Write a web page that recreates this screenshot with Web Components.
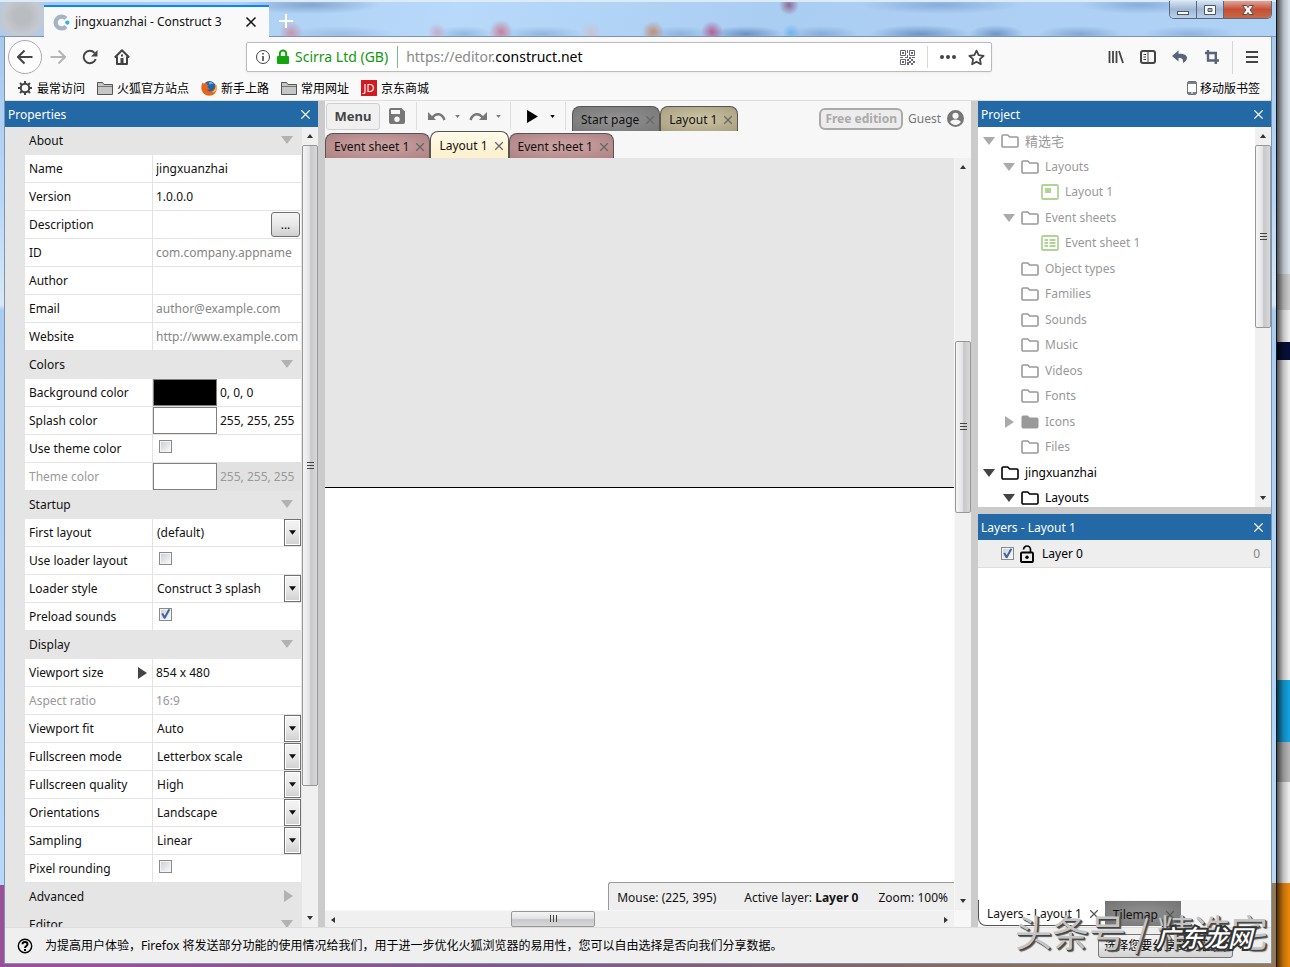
<!DOCTYPE html>
<html lang="zh-CN">
<head>
<meta charset="utf-8">
<title>jingxuanzhai - Construct 3</title>
<style>
  html, body { height: 100%; }
  body {
    margin: 0;
    overflow: hidden;
    font: 12px/18px "Noto Sans", "Noto Sans CJK SC", sans-serif;
    color: #111;
  }
</style>
</head>
<body>
<desk-top>
  <browser-window>
    <title-bar slot="title"></title-bar>
    <nav-bar></nav-bar>
    <bookmark-bar></bookmark-bar>
    <editor-app>
      <dock-panel slot="left" heading="Properties"><property-grid></property-grid></dock-panel>
      <editor-view slot="main"></editor-view>
      <dock-panel slot="project" heading="Project"><project-tree></project-tree></dock-panel>
      <dock-panel slot="layers" heading="Layers - Layout 1"><layer-list></layer-list></dock-panel>
    </editor-app>
    <notice-bar></notice-bar>
  </browser-window>
</desk-top>

<script>
const ICONS = {
  close: ['0 0 12 12', '<path d="M1.500 1.500l9 9M10.500 1.500l-9 9" fill="none" stroke="currentColor" stroke-width="1.500"/>'],
  plus: ['0 0 14 14', '<path d="M7 0v14M0 7h14" fill="none" stroke="currentColor" stroke-width="2"/>'],
  back: ['0 0 16 16', '<path d="M15.500 8H1M7.500 1.500L1 8l6.500 6.500" fill="none" stroke="currentColor" stroke-width="2"/>'],
  forward: ['0 0 16 16', '<path d="M.5 8H15M8.500 1.500L15 8l-6.500 6.500" fill="none" stroke="currentColor" stroke-width="2"/>'],
  reload: ['0 0 16 16', '<path d="M13.700 10A6.200 6.200 0 1 1 12.500 3.800" fill="none" stroke="currentColor" stroke-width="2"/><path d="M15.500 1v6.500H9z" fill="currentColor"/>'],
  home: ['0 0 16 16', '<path d="M.8 8.500L8 1.300l7.200 7.200M3 7.500V15h10V7.500" fill="none" stroke="currentColor" stroke-width="2" stroke-linejoin="round"/><path d="M6.500 9h3v6h-3zM7 5.500h2v2H7z" fill="currentColor"/>'],
  info: ['0 0 16 16', '<circle cx="8" cy="8" r="6.500" fill="none" stroke="currentColor"/><path d="M7.200 4h1.600v1.600H7.200zM7.200 7h1.600v5H7.200z" fill="currentColor"/>'],
  lock: ['0 0 14 16', '<path d="M3.800 7V4.800a3.200 3.200 0 0 1 6.400 0V7" fill="none" stroke="currentColor" stroke-width="2"/><rect x="1" y="7" width="12" height="8" rx="1" fill="currentColor"/>'],
  qr: ['0 0 15 15', '<path d="M.5.5h5v5h-5zM9.500.5h5v5h-5zM.5 9.500h5v5h-5z" fill="none" stroke="currentColor"/><path d="M2 2h2v2H2zM11 2h2v2h-2zM2 11h2v2H2zM7 0h1v3H7zM7 5h1v3H7zM0 7h3v1H0zM5 7h2v1H5zM9 7h2v2H9zM12 7h3v1h-3zM7 9h2v2H7zM11 9h2v2h-2zM9 11h2v2H9zM13 11h2v2h-2zM11 13h2v2h-2zM7 12h2v3H7z" fill="currentColor"/>'],
  dots: ['0 0 16 16', '<g fill="currentColor"><circle cx="2" cy="8" r="2"/><circle cx="8" cy="8" r="2"/><circle cx="14" cy="8" r="2"/></g>'],
  star: ['0 0 16 16', '<path d="M8 1.500l2 4.300 4.700.6-3.500 3.200.9 4.700L8 12l-4.100 2.300.9-4.700L1.300 6.400 6 5.800z" fill="none" stroke="currentColor" stroke-width="1.700" stroke-linejoin="round"/>'],
  library: ['0 0 16 16', '<path d="M1.500 2v12M5 2v12M8.500 2v12M11 2l4 12" fill="none" stroke="currentColor" stroke-width="1.800"/>'],
  sidebar: ['0 0 16 14', '<rect x="1" y="1" width="14" height="12" rx="2" fill="none" stroke="currentColor" stroke-width="2"/><path d="M8 1v12M3.500 4.500H6M3.500 7H6M3.500 9.500H6" fill="none" stroke="currentColor"/>'],
  reply: ['0 0 16 16', '<path d="M6.500 1.500L0 7l6.500 5.500V9c3.500-.3 5 1 4.500 5 2.500-1 4-3 4-5.200C15 6.200 12 4.500 6.500 4.800z" fill="currentColor"/>'],
  crop: ['0 0 16 16', '<path d="M4 1v10.500h11M1 4h10.800v11" fill="none" stroke="currentColor" stroke-width="2.400"/>'],
  menu: ['0 0 14 14', '<path d="M1 2h12M1 7h12M1 12h12" stroke="currentColor" stroke-width="2"/>'],
  gear: ['0 0 16 16', '<circle cx="8" cy="8" r="4.200" fill="none" stroke="currentColor" stroke-width="2"/><path d="M8 1v3M8 12v3M1 8h3M12 8h3M3 3l2 2M11 11l2 2M13 3l-2 2M5 11l-2 2" stroke="currentColor" stroke-width="2"/>'],
  bookmarks: ['0 0 16 14', '<path d="M.5 13.500v-12h5l1.500 2h8.500v10z" fill="#c6c6c6" stroke="#555"/><path d="M1 5.500h14" stroke="#777"/>'],
  firefox: ['0 0 16 16', '<circle cx="8.500" cy="7.500" r="6.500" fill="#2a62a8"/><path d="M8 2.500c2-1 4 0 4.500 1.500-1.500-.5-2 .5-3 .5-1.500 0-2-1-1.500-2z" fill="#6db4e0"/><path d="M1.500 2.500C0 6-.2 9 1.500 12c3 4.800 10 5 13 .5 1.600-2.500 1.700-6 .3-8.500-.3 3-1 5.500-3 6.700-2.300 1.300-5 .8-6-1 1.500.5 2.500-.2 3-1-2-.2-2.500-1-2.300-2l1.500-1C6.500 5 5.500 4.500 5 2.500 4 3 3.600 3.600 3.500 4.200z" fill="#e8641b"/><path d="M14.800 4c.2 4-1.500 7-4.300 8.200 1.800.2 3 0 4-1 1.400-2 1.500-5 .3-7.200z" fill="#fdc12d"/>'],
  phone: ['0 0 10 16', '<rect x=".5" y="1.500" width="9" height="13" rx="1.500" fill="#fff" stroke="#6d7076"/><path d="M1 2h8v2H1zM1 12h8v2H1z" fill="#7b7f86"/><path d="M4 13h2" stroke="#fff"/>'],
  construct: ['0 0 16 16', '<path d="M12.200 11.800A5.600 5.600 0 1 1 12.200 4.200" fill="none" stroke="#a5b3c3" stroke-width="4"/><circle cx="13.500" cy="8" r="2" fill="#2fb2e8"/>'],
  save: ['0 0 16 16', '<path d="M2 0h10.500L16 3.500V14a2 2 0 0 1-2 2H2a2 2 0 0 1-2-2V2a2 2 0 0 1 2-2zm0 2v4h9V2zm6 6.500a2.700 2.700 0 1 0 0 5.400 2.700 2.700 0 0 0 0-5.400z" fill="currentColor" fill-rule="evenodd"/>'],
  undo: ['0 0 18 10', '<path d="M4 7C8 1.500 14 2 16.500 9" fill="none" stroke="currentColor" stroke-width="2.400"/><path d="M0 1v8h8z" fill="currentColor"/>'],
  redo: ['0 0 18 10', '<path d="M14 7C10 1.500 4 2 1.500 9" fill="none" stroke="currentColor" stroke-width="2.400"/><path d="M18 1v8h-8z" fill="currentColor"/>'],
  play: ['0 0 10 12', '<path d="M0 0l10 6-10 6z" fill="currentColor"/>'],
  caret: ['0 0 6 4', '<path d="M0 0h6L3 4z" fill="currentColor"/>'],
  down: ['0 0 12 8', '<path d="M0 0h12L6 8z" fill="currentColor"/>'],
  right: ['0 0 9 12', '<path d="M0 0l9 6-9 6z" fill="currentColor"/>'],
  user: ['0 0 16 16', '<path d="M8 0a8 8 0 1 0 0 16A8 8 0 0 0 8 0zm0 2.500a2.900 2.900 0 1 1 0 5.800 2.900 2.900 0 0 1 0-5.800zM8 14c-2.200 0-4-1-5-2.700.3-1.600 3-2.400 5-2.400s4.700.8 5 2.400C12 13 10.200 14 8 14z" fill="currentColor"/>'],
  folder: ['0 0 18 14', '<path d="M1 2.200Q1 1 2.200 1h4.500l2 2h7.100Q17 3 17 4.200v7.600q0 1.200-1.200 1.200H2.200Q1 13 1 11.800z" fill="none" stroke="currentColor" stroke-width="1.600"/>'],
  folderFull: ['0 0 18 14', '<path d="M.5 2.200Q.5.500 2.200.500h4.500l2 2h7.100q1.700 0 1.700 1.700v7.600q0 1.700-1.700 1.700H2.200q-1.700 0-1.700-1.700z" fill="currentColor"/>'],
  layout: ['0 0 18 16', '<rect x="1" y="1" width="16" height="14" rx="1" fill="none" stroke="#b0d494" stroke-width="1.800"/><path d="M4 4h6v5H4z" fill="#b0d494"/>'],
  sheet: ['0 0 18 16', '<rect x="1" y="1" width="16" height="14" rx="1" fill="none" stroke="#b0d494" stroke-width="1.800"/><path d="M3.500 5H7M8.500 5h6M3.500 8H7M8.500 8h6M3.500 11H7M8.500 11h6" stroke="#b0d494" stroke-width="1.800"/>'],
  unlock: ['0 0 14 18', '<path d="M3.500 4.500a3.500 3.500 0 0 1 7 0V8" fill="none" stroke="currentColor" stroke-width="1.700"/><rect x="1" y="7.500" width="12" height="9.500" rx="1" fill="none" stroke="currentColor" stroke-width="1.900"/><circle cx="7" cy="12.200" r="1.700" fill="currentColor"/>'],
  help: ['0 0 16 16', '<circle cx="8" cy="8" r="6.700" fill="none" stroke="currentColor" stroke-width="1.400"/><path d="M5.500 6.300C5.500 3.300 10.500 3.300 10.500 6.300 10.500 8 8 8 8 10" fill="none" stroke="currentColor" stroke-width="1.900"/><path d="M7 11h2v2H7z" fill="currentColor"/>'],
  minimize: ['0 0 14 12', '<rect x="1.500" y="7.500" width="11" height="3" fill="#fff" stroke="#4c566b"/>'],
  maximize: ['0 0 14 12', '<path d="M1.500 1.500h11v9h-11zM5 4.500h4v3H5z" fill="#fff" stroke="#4c566b" fill-rule="evenodd"/>'],
  quit: ['0 0 14 12', '<path d="M1.500 1.500h4L7 3.500l1.500-2h4L9 6l3.500 4.500h-4L7 8.500l-1.500 2h-4L5 6z" fill="#fff" stroke="#5a4a55"/>']
};

function icon(name, width, color) {
  const [box, body] = ICONS[name];
  const [, , w, h] = box.split(' ');
  const height = Math.round(width * h / w);
  return `<svg viewBox="${box}" width="${width}" height="${height}" ${color ? `style="color:${color}"` : ''} aria-hidden="true">${body}</svg>`;
}

const RESET = `
  :host, * { box-sizing: border-box; }
  svg { display: block; flex: none; }
  button, input, select { font: inherit; color: inherit; margin: 0; padding: 0; border: 0; border-radius: 0; background: none; outline: none; }
  button { display: flex; align-items: center; justify-content: center; flex: none; }
  a { color: inherit; text-decoration: none; }
`;

const CHECKBOX = `
  input[type=checkbox] {
    appearance: none;
    display: block;
    flex: none;
    width: 13px;
    height: 13px;
    border: 1px solid #8a8a8a;
    background: linear-gradient(135deg, #c9cdd2, #fbfbfb);
    box-shadow: inset 0 0 0 1px #f4f4f4;
  }
  input[type=checkbox]:checked::before {
    content: "";
    display: block;
    width: 11px;
    height: 11px;
    background: #3f62a5;
    clip-path: polygon(12% 48%, 28% 42%, 42% 66%, 76% 4%, 94% 8%, 48% 94%, 34% 92%);
  }
`;

class BaseElement extends HTMLElement {
  constructor() {
    super();
    this.shadow = this.attachShadow({ mode: 'open' });
  }

  connectedCallback() {
    this.shadow.innerHTML = `<style>${RESET}${this.styles()}</style>${this.render()}`;
  }

  styles() { return ''; }

  render() { return '<slot></slot>'; }
}

// Glass desktop with the slice of the windows lying behind on the right
class DeskTop extends BaseElement {
  styles() {
    return `
      :host { display: grid; grid-template-columns: minmax(0, 1fr) 13px; height: 100vh; position: relative; overflow: hidden; }
      .behind {
        background:
          linear-gradient(90deg, rgba(0,0,0,.65), rgba(0,0,0,.2) 50%, transparent),
          linear-gradient(#dfe8f2 0 274px, #cfcfcf 274px 310px, #f4f4f4 310px 342px, #07103a 342px 360px, #f2f2f2 360px 680px, #14a6e4 680px 742px, #b9b9b9 742px 782px, #f2f2f2 782px 883px, #ef8a0c 883px);
      }
      .mark { position: absolute; white-space: nowrap; pointer-events: none; }
      .author {
        right: 22px;
        bottom: 12px;
        font: 37px/48px "Noto Sans CJK SC", sans-serif;
        color: #c4c4c4;
        text-shadow: 1px 1px 0 #444, 2px 2px 1px #555;
      }
      .site {
        right: 38px;
        bottom: 15px;
        font: italic 500 24px/30px "Noto Sans CJK SC", sans-serif;
        color: #fff;
        -webkit-text-stroke: 4px #333;
        paint-order: stroke fill;
      }
    `;
  }

  render() {
    return `
      <slot></slot>
      <div class="behind"></div>
      <div class="mark author">头条号 / 精选宅</div>
      <div class="mark site">广东龙网</div>
    `;
  }
}

class BrowserWindow extends BaseElement {
  styles() {
    return `
      :host {
        display: flex;
        flex-direction: column;
        min-width: 0;
        min-height: 0;
        padding: 0 4px 3px;
        border-right: 1px solid #151515;
        background:
          linear-gradient(transparent 885px, #9a4f98 885px) left / 6px 100% no-repeat,
          linear-gradient(transparent 883px, #94785a 883px) right / 6px 100% no-repeat,
          linear-gradient(90deg, #9a4f98 10%, #80588a 40%, #836a63 75%, #94785a) bottom / 100% 4px no-repeat,
          linear-gradient(#b4d5f7, #a6c9ee 37px, #b7d7f8 200px, #d8e9f8 305px, #a9cdf2 310px, #b9dbfa);
      }
      .client {
        display: flex;
        flex-direction: column;
        flex: 1;
        min-height: 0;
        border: 1px solid #7f93ab;
        border-top: 0;
        background: #f9f9fa;
      }
    `;
  }

  render() {
    return '<slot name="title"></slot><div class="client"><slot></slot></div>';
  }
}

class TitleBar extends BaseElement {
  styles() {
    return `
      :host {
        display: flex;
        align-items: flex-end;
        flex: none;
        height: 37px;
        margin: 0 -4px;
        padding-left: 44px;
        border-top: 2px solid #dcebf9;
        box-shadow: inset 0 -1px #7f93ab;
        background:
          radial-gradient(circle at 22px 14px, #b9bcc1 8px, #c5c9cf 18px, transparent 30px),
          radial-gradient(circle at 291px 31px, rgba(214,110,130,.6), transparent 12px),
          radial-gradient(circle at 437px 30px, rgba(214,130,150,.5), transparent 9px),
          radial-gradient(circle at 501px 30px, rgba(204,90,115,.7), transparent 12px),
          radial-gradient(circle at 591px 31px, rgba(205,190,200,.8), transparent 11px),
          radial-gradient(circle at 653px 30px, rgba(195,125,90,.8), transparent 11px),
          radial-gradient(circle at 712px 30px, rgba(180,50,110,.7), transparent 11px),
          radial-gradient(circle at 789px 3px, rgba(140,80,120,.8), transparent 10px),
          radial-gradient(circle at 791px 31px, rgba(90,170,235,.7), transparent 9px),
          radial-gradient(ellipse 55px 8px at 340px 32px, rgba(120,155,200,.4), transparent),
          radial-gradient(ellipse 30px 8px at 464px 32px, rgba(110,150,200,.5), transparent),
          radial-gradient(ellipse 42px 8px at 542px 32px, rgba(110,150,200,.5), transparent),
          radial-gradient(ellipse 32px 8px at 680px 32px, rgba(110,150,200,.5), transparent),
          radial-gradient(ellipse 38px 8px at 746px 32px, rgba(80,120,175,.7), transparent),
          radial-gradient(ellipse 36px 8px at 822px 32px, rgba(110,150,200,.6), transparent),
          radial-gradient(ellipse 50px 9px at 920px 32px, rgba(85,125,180,.7), transparent),
          radial-gradient(ellipse 28px 9px at 996px 32px, rgba(85,125,180,.7), transparent),
          radial-gradient(ellipse 42px 8px at 1080px 32px, rgba(100,140,190,.6), transparent),
          radial-gradient(ellipse 46px 8px at 1190px 32px, rgba(110,150,200,.5), transparent),
          radial-gradient(ellipse 70px 9px at 310px 3px, rgba(100,135,180,.6), transparent),
          radial-gradient(ellipse 80px 9px at 940px 3px, rgba(110,150,200,.6), transparent),
          radial-gradient(ellipse 60px 9px at 1140px 3px, rgba(110,150,200,.6), transparent),
          linear-gradient(100deg, #a8cbf0 8%, #b8d9f9 36%, #aacdf2 60%, #b0d2f5);
      }
      .tab { display: flex; align-items: center; width: 225px; height: 32px; padding: 0 12px 0 9px; gap: 5px; border-top: 2px solid #0a84ff; background: #f9f9fa; }
      .tab span { flex: 1; white-space: nowrap; }
      .new { height: 32px; margin-left: 10px; color: #fff; }
      .controls { display: flex; align-self: flex-start; margin: -1px 4px 0 auto; border: 1px solid #59687f; border-top: 0; border-radius: 0 0 5px 5px; overflow: hidden; }
      .controls button { width: 27px; height: 17px; border-right: 1px solid #59687f; background: linear-gradient(#d5e3f2, #9fb7d3 50%, #b9d1ea); }
      .controls button:last-child { width: 47px; border: 0; background: linear-gradient(#e5a493, #c34f36 50%, #c96a45); }
    `;
  }

  render() {
    return `
      <div class="tab">${icon('construct', 17)}<span>jingxuanzhai - Construct 3</span><button aria-label="Close tab">${icon('close', 12)}</button></div>
      <button class="new" aria-label="New tab">${icon('plus', 14)}</button>
      <div class="controls">
        <button aria-label="Minimize">${icon('minimize', 14)}</button>
        <button aria-label="Maximize">${icon('maximize', 14)}</button>
        <button aria-label="Close">${icon('quit', 14)}</button>
      </div>
    `;
  }
}

class NavBar extends BaseElement {
  styles() {
    return `
      :host { display: flex; align-items: center; flex: none; height: 40px; padding: 0 12px 0 3px; color: #444; }
      .back { width: 34px; height: 34px; border: 1px solid #aaa; border-radius: 50%; background: #fff; }
      .tools { display: flex; align-items: center; gap: 16px; margin-left: 8px; }
      .field {
        display: flex;
        align-items: center;
        flex: 1;
        height: 30px;
        margin: 0 116px;
        padding: 0 6px 0 8px;
        border: 1px solid #bbb;
        border-radius: 2px;
        background: #fff;
        box-shadow: 0 1px 3px rgba(0,0,0,.06);
        font-size: 14px;
        line-height: 20px;
        white-space: nowrap;
      }
      .owner { margin: 0 9px 0 5px; color: #12980c; }
      .owner + i { background: #7ec17b; }
      i { width: 1px; height: 22px; background: #d7d7d7; }
      label { margin-left: 8px; color: #888; }
      input { flex: 1; min-width: 0; height: 20px; color: #000; }
      .lock { margin-left: 5px; }
      .qr { margin-right: 12px; color: #667; }
      .dots { margin: 0 12px; }
      .right { display: flex; align-items: center; gap: 16px; }
      .right i { height: 33px; margin: 0 -4px; }
      .blue { color: #56657a; }
    `;
  }

  render() {
    return `
      <button class="back" aria-label="Back">${icon('back', 16)}</button>
      <div class="tools">
        <button aria-label="Forward">${icon('forward', 16, '#b5b5b5')}</button>
        <button aria-label="Reload">${icon('reload', 16)}</button>
        <button aria-label="Home">${icon('home', 16)}</button>
      </div>
      <div class="field">
        ${icon('info', 16)}
        <span class="lock">${icon('lock', 14, '#12a50c')}</span>
        <span class="owner">Scirra Ltd (GB)</span><i></i>
        <label for="url">https://editor.</label><input id="url" value="construct.net">
        <button class="qr" aria-label="QR code">${icon('qr', 15)}</button><i></i>
        <button class="dots" aria-label="Page actions">${icon('dots', 16)}</button>
        <button aria-label="Bookmark">${icon('star', 17)}</button>
      </div>
      <div class="right">
        <button aria-label="Library">${icon('library', 16)}</button>
        <button aria-label="Sidebars">${icon('sidebar', 16)}</button>
        <button class="blue" aria-label="Undo close">${icon('reply', 16)}</button>
        <button class="blue" aria-label="Screenshot">${icon('crop', 16)}</button>
        <i></i>
        <button aria-label="Menu">${icon('menu', 14)}</button>
      </div>
    `;
  }
}

class BookmarkBar extends BaseElement {
  styles() {
    return `
      :host { display: flex; align-items: center; flex: none; gap: 12px; height: 24px; padding: 0 11px 2px 12px; border-bottom: 1px solid #ddd; font: 12px/18px "Noto Sans CJK SC", sans-serif; color: #000; }
      a { display: flex; align-items: center; gap: 4px; white-space: nowrap; }
      a:last-child { margin-left: auto; gap: 3px; }
      b { width: 16px; height: 16px; background: #d11a22; color: #fff; font: 11px/16px "Noto Sans", sans-serif; text-align: center; }
    `;
  }

  render() {
    return `
      <a href="#">${icon('gear', 16, '#444')}最常访问</a>
      <a href="#">${icon('bookmarks', 16)}火狐官方站点</a>
      <a href="#">${icon('firefox', 16)}新手上路</a>
      <a href="#">${icon('bookmarks', 16)}常用网址</a>
      <a href="#"><b>JD</b>京东商城</a>
      <a href="#">${icon('phone', 10)}移动版书签</a>
    `;
  }
}

class EditorApp extends BaseElement {
  styles() {
    return `
      :host { display: grid; grid-template-columns: 313px minmax(0, 1fr) 293px; gap: 7px; flex: 1; min-height: 0; background: #cbcbcb; }
      .side { display: grid; grid-template-rows: minmax(0, 406fr) minmax(0, 413fr); gap: 7px; min-height: 0; }
      ::slotted(*) { min-height: 0; min-width: 0; }
    `;
  }

  render() {
    return `
      <slot name="left"></slot>
      <slot name="main"></slot>
      <div class="side"><slot name="project"></slot><slot name="layers"></slot></div>
    `;
  }
}

class DockPanel extends BaseElement {
  styles() {
    return `
      :host { display: flex; flex-direction: column; overflow: hidden; background: #fff; }
      header { display: flex; align-items: center; justify-content: space-between; flex: none; height: 26px; padding: 2px 7px 0 3px; background: #2369a5; color: #fff; }
      header button { margin-bottom: 2px; }
      ::slotted(*) { flex: 1; min-height: 0; }
    `;
  }

  render() {
    return `
      <header><span>${this.getAttribute('heading')}</span><button aria-label="Close panel">${icon('close', 11)}</button></header>
      <slot></slot>
    `;
  }
}

// range holds the shares of the track before, under and after the thumb
class ScrollBar extends BaseElement {
  styles() {
    const dir = this.hasAttribute('horizontal') ? 'row' : 'column';
    const [before, thumb, after] = this.getAttribute('range').split(' ');
    return `
      :host { display: flex; flex-direction: ${dir}; background: #f0f0f0; }
      button { width: 16px; height: 18px; color: #333; }
      .before { flex: ${before} 0 0; }
      .after { flex: ${after} 0 0; }
      .thumb {
        display: flex;
        flex-direction: ${dir};
        align-items: center;
        justify-content: center;
        gap: 2px;
        flex: ${thumb} 0 0;
        border: 1px solid #979797;
        border-radius: 2px;
        background: linear-gradient(${dir === 'row' ? '180deg' : '90deg'}, #f5f5f5, #e4e4e6 45%, #c8c8cb 55%, #d8d8da);
      }
      .thumb i { ${dir === 'row' ? 'width: 1px; height: 7px;' : 'width: 7px; height: 1px;'} background: #444; }
    `;
  }

  render() {
    const horizontal = this.hasAttribute('horizontal');
    const arrow = (turn) => `<button aria-label="Scroll"><svg viewBox="0 0 6 4" width="6" height="4" style="transform: rotate(${turn}deg)"><path d="M0 4h6L3 0z" fill="currentColor"/></svg></button>`;
    return `
      ${arrow(horizontal ? -90 : 0)}
      <div class="before"></div><div class="thumb"><i></i><i></i><i></i></div><div class="after"></div>
      ${arrow(horizontal ? 90 : 180)}
    `;
  }
}

const PROPERTIES = [
  { section: 'About' },
  { name: 'Name', text: 'jingxuanzhai' },
  { name: 'Version', text: '1.0.0.0' },
  { name: 'Description', more: true },
  { name: 'ID', hint: 'com.company.appname' },
  { name: 'Author', text: '' },
  { name: 'Email', hint: 'author@example.com' },
  { name: 'Website', hint: 'http://www.example.com' },
  { section: 'Colors' },
  { name: 'Background color', color: '#000000', text: '0, 0, 0' },
  { name: 'Splash color', color: '#ffffff', text: '255, 255, 255' },
  { name: 'Use theme color', check: false },
  { name: 'Theme color', color: '#ffffff', text: '255, 255, 255', disabled: true },
  { section: 'Startup' },
  { name: 'First layout', option: '(default)' },
  { name: 'Use loader layout', check: false },
  { name: 'Loader style', option: 'Construct 3 splash' },
  { name: 'Preload sounds', check: true },
  { section: 'Display' },
  { name: 'Viewport size', text: '854 x 480', expand: true },
  { name: 'Aspect ratio', text: '16:9', disabled: true },
  { name: 'Viewport fit', option: 'Auto' },
  { name: 'Fullscreen mode', option: 'Letterbox scale' },
  { name: 'Fullscreen quality', option: 'High' },
  { name: 'Orientations', option: 'Landscape' },
  { name: 'Sampling', option: 'Linear' },
  { name: 'Pixel rounding', check: false },
  { section: 'Advanced', closed: true },
  { section: 'Editor' }
];

class PropertyGrid extends BaseElement {
  styles() {
    return `
      ${CHECKBOX}
      :host { display: flex; gap: 1px; overflow: hidden; padding-left: 20px; background: #e5e5e5; }
      scroll-bar { width: 16px; flex: none; }
      .list { flex: 1; min-width: 0; overflow: hidden; }
      table { width: 100%; border-collapse: separate; border-spacing: 0; table-layout: fixed; }
      td, th { height: 28px; padding: 0; font-weight: normal; text-align: left; white-space: nowrap; }
      td, tr.item th { border-bottom: 1px solid #e3e3e3; background: #fff; }
      tr.item th { padding-left: 4px; border-right: 1px solid #e3e3e3; }
      th > div, td > div { display: flex; align-items: center; height: 27px; position: relative; }
      th > div { justify-content: space-between; }
      .head { width: 100%; height: 28px; padding: 0 8px 0 4px; justify-content: space-between; }
      .head svg { margin-bottom: 3px; color: #b2b2b2; }
      .expand { margin-right: 5px; color: #444; }
      input:not([type]) { flex: 1; min-width: 0; height: 27px; padding-left: 3px; }
      input::placeholder { color: #858585; opacity: 1; }
      input[type=color] { appearance: none; width: 64px; height: 27px; flex: none; border: 1px solid #808080; }
      input[type=color]::-webkit-color-swatch-wrapper { padding: 0; }
      input[type=color]::-webkit-color-swatch { border: 0; border-radius: 0; }
      input[type=checkbox] { margin: 0 0 5px 6px; }
      select { appearance: none; width: 100%; height: 27px; padding-left: 4px; }
      .drop { position: absolute; right: 0; top: 0; display: flex; align-items: center; justify-content: center; width: 17px; height: 27px; border: 1px solid #707070; background: linear-gradient(#f4f4f4, #e8e8e8 50%, #d0d0d0); box-shadow: inset 0 0 0 1px #fff; pointer-events: none; }
      .more { width: 29px; height: 25px; margin: 0 1px 0 auto; border: 1px solid #707070; border-radius: 3px; background: linear-gradient(#f4f4f4, #e8e8e8 50%, #d0d0d0); }
      .disabled { color: #999; }
      .disabled .tinted { background: #e1e1e1; }
    `;
  }

  row(prop, index) {
    if (prop.section) {
      return `<tr><th colspan="2"><button class="head">${prop.section}${prop.closed ? icon('right', 9) : icon('down', 12)}</button></th></tr>`;
    }
    const id = `prop${index}`;
    const off = prop.disabled ? 'disabled' : '';
    let value = '';
    if (prop.more) {
      value = `<button class="more" id="${id}">...</button>`;
    } else if (prop.option) {
      value = `<select id="${id}"><option>${prop.option}</option></select><span class="drop">${icon('caret', 7)}</span>`;
    } else if ('check' in prop) {
      value = `<input type="checkbox" id="${id}" ${prop.check ? 'checked' : ''}>`;
    } else if (prop.color) {
      value = `<input type="color" value="${prop.color}" aria-label="${prop.name}" ${off}><input id="${id}" value="${prop.text}" ${off}>`;
    } else {
      value = `<input id="${id}" value="${prop.text || ''}" placeholder="${prop.hint || ''}" ${off}>`;
    }
    return `
      <tr class="item ${off}">
        <th><div><label for="${id}">${prop.name}</label>${prop.expand ? `<button class="expand" aria-label="Expand">${icon('right', 9)}</button>` : ''}</div></th>
        <td><div class="${prop.color ? 'tinted' : ''}">${value}</div></td>
      </tr>
    `;
  }

  render() {
    return `
      <div class="list"><table><colgroup><col style="width:128px"><col></colgroup>${PROPERTIES.map((p, i) => this.row(p, i)).join('')}</table></div>
      <scroll-bar range="0 641 123"></scroll-bar>
    `;
  }
}

// Tabs: kind is start, sheet, layout or active
class TabChip extends BaseElement {
  styles() {
    return `
      :host { display: flex; align-items: center; gap: 6px; height: 25px; padding: 2px 4px 0 8px; border: 1px solid #555; border-bottom: 0; border-radius: 8px 8px 0 0; color: #111; white-space: nowrap; }
      :host([kind=start]) { background: radial-gradient(#939393, #777); }
      :host([kind=sheet]) { background: radial-gradient(#d0a5a5, #ac8282); }
      :host([kind=layout]) { background: radial-gradient(#cec5a5, #a89f80); }
      :host([kind=active]) { height: 27px; background: linear-gradient(#fffbea, #fdf0cb); }
      button { color: #666; }
    `;
  }

  render() {
    return `<slot></slot><button aria-label="Close tab">${icon('close', 10)}</button>`;
  }
}

class EditorView extends BaseElement {
  styles() {
    return `
      :host { display: grid; grid-template: 30px 27px minmax(0, 1fr) 17px / minmax(0, 1fr) 16px; column-gap: 1px; background: #f7f7f7; overflow: hidden; }
      .toolbar, .sheets { grid-column: 1 / 3; display: flex; }
      .toolbar { align-items: center; color: #777; white-space: nowrap; }
      .menu { width: 54px; height: 27px; margin: 0 9px 0 1px; border: 1px solid #d0d0d0; border-radius: 3px; background: #f0f0f0; font-weight: bold; font-size: 13px; color: #444; }
      .save { margin-right: 11px; }
      .toolbar i { width: 1px; height: 28px; background: #ddd; }
      .group { display: flex; align-items: center; gap: 9px; padding: 0 9px 0 11px; }
      .run { gap: 12px; padding: 0 10px 0 16px; color: #000; }
      .pages { display: flex; align-self: flex-end; margin-left: 6px; }
      .account { display: flex; align-items: center; gap: 5px; margin-left: auto; padding: 5px 7px 0 0; }
      .account a:first-child { padding: 0 4px; border: 2px solid #aaa; border-radius: 6px; background: #ececec; color: #aaa; font-weight: bold; }
      .account svg { margin-left: 1px; }
      .sheets { align-items: flex-end; }
      .canvas { display: flex; flex-direction: column; position: relative; background: #fff; }
      .outside { flex: 329 0 0; border-bottom: 1px solid #000; background: #e6e6e6; }
      .page { flex: 423 0 0; }
      .status { position: absolute; right: 0; bottom: 0; display: flex; align-items: center; gap: 20px; height: 28px; padding: 2px 6px 0 8px; border: 1px solid #999; border-width: 1px 0 0 1px; border-radius: 3px 0 0 0; background: #eee; white-space: nowrap; }
      .status span:first-child { margin-right: 8px; }
      .across { height: 16px; align-self: center; }
    `;
  }

  render() {
    return `
      <div class="toolbar">
        <button class="menu">Menu</button>
        <button class="save" aria-label="Save">${icon('save', 16)}</button><i></i>
        <div class="group">
          <button aria-label="Undo">${icon('undo', 18)}</button><button aria-label="Undo history">${icon('caret', 5)}</button>
          <button aria-label="Redo">${icon('redo', 18)}</button><button aria-label="Redo history">${icon('caret', 5)}</button>
        </div><i></i>
        <div class="group run"><button aria-label="Preview">${icon('play', 11)}</button><button aria-label="Preview options">${icon('caret', 5)}</button></div><i></i>
        <div class="pages"><tab-chip kind="start">Start page</tab-chip><tab-chip kind="layout">Layout 1</tab-chip></div>
        <div class="account"><a href="#">Free edition</a><a href="#">Guest</a>${icon('user', 17)}</div>
      </div>
      <div class="sheets">
        <tab-chip kind="sheet">Event sheet 1</tab-chip><tab-chip kind="active">Layout 1</tab-chip><tab-chip kind="sheet">Event sheet 1</tab-chip>
      </div>
      <div class="canvas">
        <div class="outside"></div>
        <div class="page"></div>
        <div class="status"><span>Mouse: (225, 395)</span><span>Active layer: <b>Layer 0</b></span><span>Zoom: 100%</span></div>
      </div>
      <scroll-bar range="166 170 381"></scroll-bar>
      <scroll-bar class="across" horizontal range="171 82 344"></scroll-bar>
    `;
  }
}

const TREE = [
  [0, 'folder', '精选宅', 'down'],
  [1, 'folder', 'Layouts', 'down'],
  [2, 'layout', 'Layout 1'],
  [1, 'folder', 'Event sheets', 'down'],
  [2, 'sheet', 'Event sheet 1'],
  [1, 'folder', 'Object types'],
  [1, 'folder', 'Families'],
  [1, 'folder', 'Sounds'],
  [1, 'folder', 'Music'],
  [1, 'folder', 'Videos'],
  [1, 'folder', 'Fonts'],
  [1, 'folderFull', 'Icons', 'right'],
  [1, 'folder', 'Files'],
  [0, 'folder', 'jingxuanzhai', 'down', true],
  [1, 'folder', 'Layouts', 'down', true]
];

class ProjectTree extends BaseElement {
  styles() {
    return `
      :host { display: flex; overflow: hidden; background: #fff; }
      ul { flex: 1; margin: 0; padding: 1px 0 0; list-style: none; overflow: hidden; }
      li { display: flex; align-items: center; height: 26px; padding-left: 5px; color: #999; white-space: nowrap; }
      li:nth-child(even) { height: 25px; }
      li.open { color: #000; }
      li.d1 { padding-left: 25px; }
      li.d2 { padding-left: 45px; }
      .mark { display: flex; justify-content: center; width: 12px; margin-right: 6px; color: #aaa; }
      .open .mark { color: #444; }
      li > svg { margin-right: 6px; }
      .name:lang(zh) { font-size: 13px; }
      scroll-bar { width: 16px; flex: none; }
    `;
  }

  render() {
    const rows = TREE.map(([depth, kind, label, mark, open]) => `
      <li class="d${depth} ${open ? 'open' : ''}">
        <span class="mark">${mark ? icon(mark, mark === 'down' ? 12 : 9) : ''}</span>${icon(kind, 18)}<span class="name" lang="${label < '~' ? 'en' : 'zh'}">${label}</span>
      </li>`);
    return `<ul>${rows.join('')}</ul><scroll-bar range="0 182 162"></scroll-bar>`;
  }
}

class LayerList extends BaseElement {
  styles() {
    return `
      ${CHECKBOX}
      :host { display: flex; flex-direction: column; background: #fff; }
      .layer { display: flex; align-items: center; gap: 6px; height: 28px; padding: 0 11px 0 23px; border-bottom: 1px solid #ddd; background: #eee; }
      .layer label { flex: 1; padding-left: 2px; color: #000; }
      .layer output { color: #888; }
      .rest { flex: 1; }
      .tabs { display: flex; align-items: flex-start; height: 27px; background: #f6f6f6; color: #111; white-space: nowrap; }
      .tabs div { display: flex; align-items: center; gap: 7px; height: 26px; padding: 2px 6px 0 8px; background: #fff; border: 1px solid #555; border-width: 0 0 1px 1px; border-radius: 0 0 0 8px; }
      .tabs .off { height: 25px; margin-top: 1px; border: 0; border-radius: 0; background: radial-gradient(#929292, #737373); }
      .tabs button { color: #555; }
    `;
  }

  render() {
    return `
      <div class="layer"><input type="checkbox" id="layer0" checked>${icon('unlock', 14, '#000')}<label for="layer0">Layer 0</label><output>0</output></div>
      <div class="rest"></div>
      <div class="tabs">
        <div>Layers - Layout 1<button aria-label="Close tab">${icon('close', 10)}</button></div>
        <div class="off">Tilemap<button aria-label="Close tab">${icon('close', 10)}</button></div>
      </div>
    `;
  }
}

class NoticeBar extends BaseElement {
  styles() {
    return `
      :host { display: flex; align-items: center; flex: none; height: 36px; padding: 0 38px 0 12px; border-top: 1px solid #ddd; background: #efefef; color: #000; white-space: nowrap; }
      span { flex: 1; margin-left: 12px; }
      button { height: 24px; margin-top: 1px; padding: 0 5px; border: 1px solid #777; border-radius: 3px; background: linear-gradient(#f3f3f3, #e8e8e8 50%, #d2d2d2); }
    `;
  }

  render() {
    return `
      ${icon('help', 16)}
      <span>为提高用户体验，Firefox 将发送部分功能的使用情况给我们，用于进一步优化火狐浏览器的易用性，您可以自由选择是否向我们分享数据。</span>
      <button>选择您要分享的内容(C)</button>
    `;
  }
}

customElements.define('desk-top', DeskTop);
customElements.define('browser-window', BrowserWindow);
customElements.define('title-bar', TitleBar);
customElements.define('nav-bar', NavBar);
customElements.define('bookmark-bar', BookmarkBar);
customElements.define('editor-app', EditorApp);
customElements.define('dock-panel', DockPanel);
customElements.define('scroll-bar', ScrollBar);
customElements.define('property-grid', PropertyGrid);
customElements.define('tab-chip', TabChip);
customElements.define('editor-view', EditorView);
customElements.define('project-tree', ProjectTree);
customElements.define('layer-list', LayerList);
customElements.define('notice-bar', NoticeBar);
</script>
</body>
</html>
